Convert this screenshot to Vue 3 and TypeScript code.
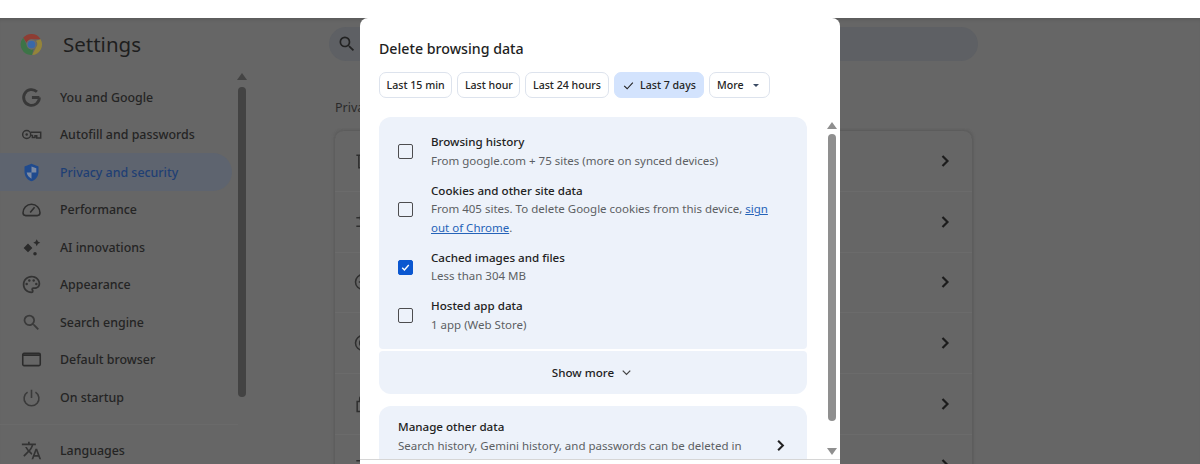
<template>
  <div class="page">
    <div class="top-band"></div>

    <div class="shell">
      <!-- 顶部 -->
      <header class="header">
        <div class="brand">
          <svg class="logo" viewBox="0 0 24 24">
            <path d="M12 1a11 11 0 0 1 9.53 5.5H12a5.5 5.5 0 0 0-5.2 3.7L3.3 5A11 11 0 0 1 12 1z" fill="#8e3d33" />
            <path d="M21.53 6.5A11 11 0 0 1 12.6 23l4.2-8.2A5.5 5.5 0 0 0 16.6 8z" fill="#94843a" />
            <path d="M3.3 5l4.6 8.8a5 5 0 0 0 6 3.2l-1.3 6A11 11 0 0 1 3.3 5z" fill="#3d7447" />
            <circle cx="12" cy="12" r="5.2" fill="#6d6d6d" />
            <circle cx="12" cy="12" r="4" fill="#3a68a8" />
          </svg>
          <span class="app-title">Settings</span>
        </div>
        <div class="search">
          <svg class="search-icon" viewBox="0 0 24 24"><path :d="searchPath" /></svg>
        </div>
      </header>

      <div class="body">
        <aside class="sidebar">
          <nav class="nav">
            <a
              v-for="item in navItems"
              :key="item.label"
              class="nav-item"
              :class="{ active: item.active, 'after-divider': item.divided }"
            >
              <svg class="nav-icon" viewBox="0 0 24 24" v-html="item.icon"></svg>
              <span>{{ item.label }}</span>
            </a>
          </nav>
          <div class="side-scroll">
            <i class="arrow-up"></i>
            <div class="side-thumb"></div>
          </div>
        </aside>

        <main class="content">
          <div class="section-title">Privacy and security</div>
          <div class="card">
            <div v-for="(icon, i) in cardIcons" :key="i" class="card-row">
              <svg class="row-icon" viewBox="0 0 24 24" v-html="icon"></svg>
              <svg class="chevron" viewBox="0 0 24 24"><path d="M9 6l6 6-6 6" /></svg>
            </div>
          </div>
        </main>
      </div>

      <!-- 对话框 -->
      <section class="dialog">
        <h2 class="dialog-title">Delete browsing data</h2>
        <div class="chips">
          <button v-for="chip in chips" :key="chip.label" class="chip" :class="{ selected: chip.selected }">
            <svg v-if="chip.selected" class="chip-check" viewBox="0 0 24 24"><path d="M4 12.5l5.5 5.5L20 6.5" /></svg>
            {{ chip.label }}
            <i v-if="chip.caret" class="caret"></i>
          </button>
        </div>

        <div class="scroll-area">
          <div class="scroll-list">
            <div class="panel">
              <label v-for="row in dataRows" :key="row.title" class="data-row">
                <span class="checkbox" :class="{ checked: row.checked }">
                  <svg v-if="row.checked" viewBox="0 0 24 24"><path d="M6 12.5l4 4 8-9" /></svg>
                </span>
                <span class="data-text">
                  <span class="data-title">{{ row.title }}</span>
                  <span class="data-sub">{{ row.sub }}<template v-if="row.link"><a class="link">sign</a> <a class="link">out of Chrome</a>.</template></span>
                </span>
              </label>
            </div>

            <div class="show-more">
              Show more
              <svg viewBox="0 0 24 24"><path d="M6 9l6 6 6-6" /></svg>
            </div>

            <div class="manage">
              <div>
                <div class="data-title">Manage other data</div>
                <div class="data-sub">Search history, Gemini history, and passwords can be deleted in</div>
              </div>
              <svg class="manage-chevron" viewBox="0 0 24 24"><path d="M9 6l6 6-6 6" /></svg>
            </div>
          </div>

          <div class="dialog-scroll">
            <i class="arrow-up light"></i>
            <div class="dialog-thumb"></div>
            <i class="arrow-down"></i>
          </div>
        </div>
      </section>
    </div>
  </div>
</template>

<script setup lang="ts">
interface NavItem {
  label: string
  icon: string
  active?: boolean
  divided?: boolean
}

interface DataRow {
  title: string
  sub: string
  link?: boolean
  checked?: boolean
}

const searchPath =
  'M15.5 14h-.79l-.28-.27A6.471 6.471 0 0 0 16 9.5 6.5 6.5 0 1 0 9.5 16c1.61 0 3.09-.59 4.23-1.57l.27.28v.79l5 4.99L20.49 19l-4.99-5zm-6 0C7.01 14 5 11.99 5 9.5S7.01 5 9.5 5 14 7.01 14 9.5 11.99 14 9.5 14z'

const navItems: NavItem[] = [
  {
    label: 'You and Google',
    icon: '<path d="M21 12h-8.5M21 12a9 9 0 1 1-2.8-6.5" fill="none" stroke="#383838" stroke-width="3.2"/>'
  },
  {
    label: 'Autofill and passwords',
    icon: '<g fill="none" stroke="#303030" stroke-width="1.7"><circle cx="6.5" cy="12" r="4.6"/><path d="M11 9.5h11.5v6.5h-4.5v-2.5h-2v2h-3v-2.5h-1.5"/></g><circle cx="6.5" cy="12" r="1.4" fill="#303030"/>'
  },
  {
    label: 'Privacy and security',
    active: true,
    icon: '<path d="M12 2L4 5v6c0 5 3.4 9.7 8 11 4.6-1.3 8-6 8-11V5z" fill="#1f4a8e"/><path d="M12 5l5.5 2v5H12zM6.5 12H12v7c-2.7-1.2-5-3.8-5.5-7z" fill="#7d8aa2"/>'
  },
  {
    label: 'Performance',
    icon: '<path d="M5.5 19h13c1.8 0 3.2-1.3 3.2-3.2C21.700 10.500 17.400 6 12 6S2.300 10.500 2.300 15.800C2.300 17.700 3.700 19 5.500 19zM10.500 15.500l5-6" fill="none" stroke="#2e2e2e" stroke-width="1.8"/>'
  },
  {
    label: 'AI innovations',
    icon: '<path d="M8 7.500l5 5-5 5-5-5zM18 2.500l1.300 2.700L22 6.500l-2.700 1.300L18 10.500l-1.300-2.700L14 6.500l2.700-1.300z" fill="#2a2a2a"/><circle cx="16" cy="19" r="2" fill="#2a2a2a"/>'
  },
  {
    label: 'Appearance',
    icon: '<path d="M12 22C6.490 22 2 17.510 2 12S6.490 2 12 2s10 4.040 10 9c0 3.310-2.690 6-6 6h-1.770c-.28 0-.5.22-.5.5 0 .12.05.23.13.33.41.47.64 1.060.64 1.670A2.500 2.500 0 0 1 12 22zm0-18c-4.410 0-8 3.590-8 8s3.590 8 8 8c.28 0 .5-.22.5-.5a.54.54 0 0 0-.14-.35c-.41-.46-.63-1.050-.63-1.650a2.500 2.500 0 0 1 2.500-2.500H16c2.210 0 4-1.790 4-4 0-3.860-3.590-7-8-7z" fill="#333"/><g fill="#333"><circle cx="6.500" cy="11.500" r="1.400"/><circle cx="9.500" cy="7.500" r="1.400"/><circle cx="14.500" cy="7.500" r="1.400"/><circle cx="17.500" cy="11.500" r="1.400"/></g>'
  },
  {
    label: 'Search engine',
    icon: `<path d="${searchPath}" fill="#3a3a3a"/>`
  },
  {
    label: 'Default browser',
    icon: '<path d="M3.500 5h17c.8 0 1.500.7 1.500 1.500v11c0 .8-.7 1.500-1.500 1.500h-17c-.8 0-1.500-.7-1.500-1.500v-11C2 5.700 2.700 5 3.500 5z" fill="none" stroke="#2c2c2c" stroke-width="1.800"/><path d="M2 6h20v2H2z" fill="#2c2c2c"/>'
  },
  {
    label: 'On startup',
    icon: '<path d="M12 3v9.500M7.500 5.800a8.500 8.500 0 1 0 9 0" fill="none" stroke="#3a3a3a" stroke-width="1.800"/>'
  },
  {
    label: 'Languages',
    divided: true,
    icon: '<path d="M12.870 15.070l-2.540-2.510.03-.03c1.740-1.940 2.980-4.170 3.710-6.530H17V4h-7V2H8v2H1v1.990h11.170C11.500 7.920 10.440 9.750 9 11.350 8.070 10.320 7.300 9.190 6.690 8h-2c.73 1.630 1.730 3.170 2.980 4.560l-5.090 5.020L4 19l5-5 3.110 3.110.76-2.040zM18.500 10h-2L12 22h2l1.120-3h4.750L21 22h2l-4.500-12zm-2.620 7l1.620-4.330L19.120 17h-3.240z" fill="#333"/>'
  }
]

const rowStroke = 'fill="none" stroke="#2e2e2e" stroke-width="1.800"'
const cardIcons: string[] = [
  `<path d="M4 5h16M7 5v15h10V5M10 2.500h4" ${rowStroke}/>`,
  `<path d="M4 7h16M4 17h16M9 4.500v5M15 14.500v5" ${rowStroke}/>`,
  `<circle cx="12" cy="12" r="9" ${rowStroke}/><path d="M7 12h10" ${rowStroke}/>`,
  `<circle cx="12" cy="12" r="9" ${rowStroke}/><circle cx="12" cy="12" r="4" ${rowStroke}/>`,
  `<path d="M5 9h14v12H5zM8 9V6a4 4 0 0 1 8 0v3" ${rowStroke}/>`,
  `<path d="M4 7h16M4 12h16M4 17h16" ${rowStroke}/>`
]

const chips = [
  { label: 'Last 15 min' },
  { label: 'Last hour' },
  { label: 'Last 24 hours' },
  { label: 'Last 7 days', selected: true },
  { label: 'More', caret: true }
]

const dataRows: DataRow[] = [
  { title: 'Browsing history', sub: 'From google.com + 75 sites (more on synced devices)' },
  {
    title: 'Cookies and other site data',
    sub: 'From 405 sites. To delete Google cookies from this device, ',
    link: true
  },
  { title: 'Cached images and files', sub: 'Less than 304 MB', checked: true },
  { title: 'Hosted app data', sub: '1 app (Web Store)' }
]
</script>

<style>
html,
body {
  margin: 0;
  background: #fff;
}
</style>

<style scoped>
.page {
  position: relative;
  width: 1200px;
  height: 464px;
  overflow: hidden;
  display: flex;
  flex-direction: column;
  font-family: "Noto Sans", "Open Sans", sans-serif;
  background: #fff;
}

.top-band {
  height: 18px;
  flex: none;
}

.shell {
  flex: 1;
  min-height: 0;
  background: #666;
  box-shadow: inset 0 4px 3px -2px #5c5c5c;
  color: #222;
}

/* 顶部 */
.header {
  height: 52px;
  display: flex;
  align-items: center;
}

.brand {
  width: 329px;
  flex: none;
  display: flex;
  align-items: center;
  padding-left: 20px;
  box-sizing: border-box;
}

.logo {
  width: 23px;
  height: 23px;
  margin-right: 20px;
}

.app-title {
  font-size: 20.5px;
  color: #1e1e1e;
}

.search {
  width: 649px;
  height: 34px;
  border-radius: 17px;
  background: #5e6064;
  display: flex;
  align-items: center;
  padding-left: 8px;
  box-sizing: border-box;
}

.search-icon {
  width: 20px;
  height: 20px;
  fill: #222;
}

.body {
  display: flex;
}

/* 侧边栏 */
.sidebar {
  width: 246px;
  flex: none;
  display: flex;
}

.nav {
  width: 238px;
  padding-top: 8.4px;
}

.nav-item {
  height: 37.5px;
  width: 232px;
  display: flex;
  align-items: center;
  padding-left: 21px;
  box-sizing: border-box;
  border-radius: 0 19px 19px 0;
  font-size: 12.4px;
  font-weight: 500;
  color: #242424;
}

.nav-item.active {
  background: #5e646f;
  color: #1f3f74;
}

.nav-item.after-divider {
  margin-top: 15.5px;
  position: relative;
}

.nav-item.after-divider::before {
  content: '';
  position: absolute;
  left: 0;
  top: -7px;
  width: 238px;
  height: 1px;
  background: #6a6a6a;
}

.nav-icon {
  width: 21px;
  height: 21px;
  margin-right: 18px;
  flex: none;
}

.side-scroll {
  width: 8px;
  padding-top: 3px;
  display: flex;
  flex-direction: column;
  align-items: center;
}

.arrow-up,
.arrow-down {
  display: block;
  width: 0;
  height: 0;
  border-left: 5px solid transparent;
  border-right: 5px solid transparent;
}

.arrow-up {
  border-bottom: 7px solid #444;
}

.arrow-up.light {
  border-bottom-color: #8f8f8f;
}

.arrow-down {
  border-top: 7px solid #8f8f8f;
}

.side-thumb {
  width: 8px;
  height: 310px;
  margin-top: 7px;
  border-radius: 4px;
  background: #434343;
}

/* 主内容 */
.content {
  margin-left: 89px;
  width: 637px;
  padding-top: 29px;
}

.section-title {
  font-size: 12.5px;
  line-height: 18px;
  color: #2a2a2a;
}

.card {
  margin-top: 14px;
  border-radius: 8px 8px 0 0;
  box-shadow: 1px 0 3px #5a5a5a, -1px 0 3px #5e5e5e, 0 -1px 2px #606060;
}

.card-row {
  height: 60.75px;
  display: flex;
  align-items: center;
  justify-content: space-between;
  padding: 0 17px 0 18px;
  box-sizing: border-box;
  border-bottom: 1px solid #6b6b6b;
}

.row-icon {
  width: 20px;
  height: 20px;
}

.chevron {
  width: 20px;
  height: 20px;
  fill: none;
  stroke: #1c1c1c;
  stroke-width: 2.6;
}

/* 对话框 */
.dialog {
  position: absolute;
  left: 360px;
  top: 18px;
  bottom: 0;
  width: 480px;
  background: #fff;
  border-radius: 8px 8px 0 0;
  display: flex;
  flex-direction: column;
  box-sizing: border-box;
  padding-top: 21px;
  color: #1f1f1f;
}

.dialog-title {
  margin: 0;
  padding-left: 19px;
  font-size: 14.2px;
  line-height: 20px;
  font-weight: 500;
}

.chips {
  display: flex;
  gap: 5px;
  margin-top: 13px;
  padding-left: 19px;
}

.chip {
  height: 26px;
  display: flex;
  align-items: center;
  padding: 0 6.6px;
  border: 1px solid #dde3ed;
  border-radius: 7px;
  background: #fff;
  font-family: inherit;
  font-size: 10.6px;
  font-weight: 500;
  color: #242424;
}

.chip.selected {
  background: #d3e3fd;
  border-color: #d3e3fd;
  padding: 0 7.5px;
}

.chip-check {
  width: 13px;
  height: 13px;
  margin-right: 5px;
  fill: none;
  stroke: #222;
  stroke-width: 2;
}

.caret {
  width: 0;
  height: 0;
  margin-left: 9px;
  margin-right: 4px;
  border-left: 3.5px solid transparent;
  border-right: 3.5px solid transparent;
  border-top: 3.5px solid #3a4a63;
}

.scroll-area {
  flex: none;
  height: 342px;
  margin-top: 19px;
  display: flex;
  overflow: hidden;
  border-bottom: 1px solid #d6d6d6;
  box-sizing: content-box;
}

.scroll-list {
  width: 428px;
  margin-left: 19px;
  flex: none;
}

.panel {
  background: #edf2fa;
  border-radius: 12px 12px 4px 4px;
  height: 232px;
  padding: 16.4px 0 0 18.5px;
  box-sizing: border-box;
  display: flex;
  flex-direction: column;
  gap: 11.5px;
}

.data-row {
  display: flex;
  align-items: center;
}

.checkbox {
  width: 15px;
  height: 15px;
  flex: none;
  margin-right: 18.5px;
  box-sizing: border-box;
  border: 1.6px solid #4d4d4f;
  border-radius: 2px;
  display: flex;
}

.checkbox.checked {
  background: #0b57d0;
  border-color: #0b57d0;
}

.checkbox svg {
  width: 100%;
  height: 100%;
  fill: none;
  stroke: #fff;
  stroke-width: 2.6;
}

.data-text {
  display: flex;
  flex-direction: column;
}

.data-title {
  display: block;
  font-size: 11.6px;
  line-height: 18.5px;
  font-weight: 500;
  color: #222;
}

.data-sub {
  display: block;
  font-size: 11.5px;
  line-height: 18.5px;
  color: #5c5f63;
  width: 345px;
}

.manage .data-sub {
  width: auto;
  white-space: nowrap;
}

.link {
  color: #2563b8;
  text-decoration: underline;
}

.show-more {
  margin-top: 2px;
  height: 43px;
  background: #edf2fa;
  border-radius: 4px 4px 12px 12px;
  display: flex;
  align-items: center;
  justify-content: center;
  font-size: 11.6px;
  font-weight: 500;
  color: #222;
}

.show-more svg {
  width: 15px;
  height: 15px;
  margin-left: 5px;
  fill: none;
  stroke: #444;
  stroke-width: 2;
}

.manage {
  margin-top: 12px;
  height: 70px;
  background: #edf2fa;
  border-radius: 12px;
  padding: 12px 17px 0 19px;
  box-sizing: border-box;
  display: flex;
  justify-content: space-between;
}

.manage-chevron {
  width: 19px;
  height: 19px;
  margin-top: 18px;
  fill: none;
  stroke: #222;
  stroke-width: 2.6;
}

.dialog-scroll {
  width: 10px;
  margin-left: 20px;
  padding-top: 5px;
  display: flex;
  flex-direction: column;
  align-items: center;
}

.dialog-thumb {
  width: 8px;
  height: 287px;
  margin-top: 5px;
  border-radius: 4px;
  background: #8f8f8f;
}

.arrow-down {
  margin-top: 27px;
}
</style>
